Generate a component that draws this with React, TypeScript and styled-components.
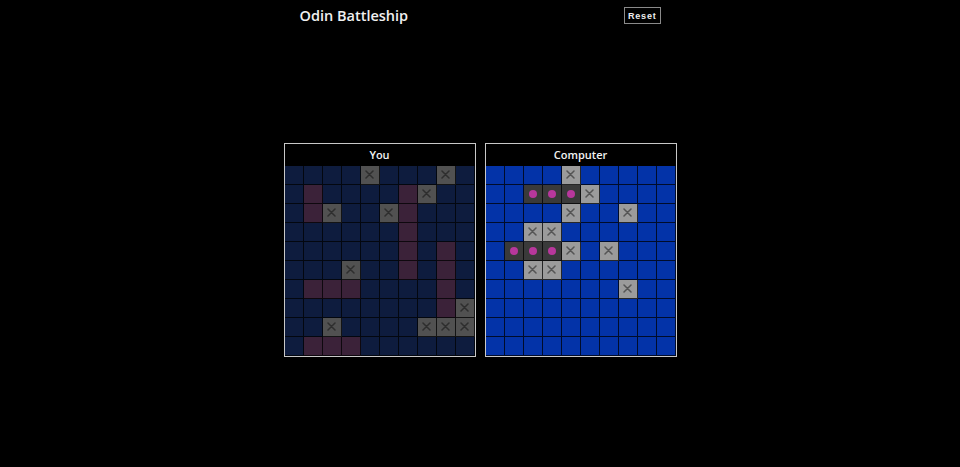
import React from "react";
import styled, { createGlobalStyle } from "styled-components";

const GlobalStyle = createGlobalStyle`
  html, body {
    margin: 0;
    padding: 0;
    background: #000;
    color: #eee;
    font-family: "Open Sans", "Noto Sans", sans-serif;
  }
`;

const Header = styled.header`
  width: 361px;
  height: 32px;
  margin: 0 auto;
  display: flex;
  justify-content: space-between;
  align-items: center;
`;

const Title = styled.h1`
  margin: 0 0 2px;
  font-size: 14.5px;
  font-weight: 600;
  color: #f0f0f0;
`;

const ResetButton = styled.button`
  height: 17px;
  padding: 0 3px;
  margin-bottom: 1px;
  background: #000;
  color: #eee;
  border: 1px solid #8a8a8a;
  font-family: "Liberation Sans", Arial, sans-serif;
  font-size: 9px;
  font-weight: 700;
  letter-spacing: 0.8px;
  cursor: pointer;
`;

const Main = styled.main`
  height: calc(100vh - 32px);
  display: flex;
  justify-content: center;
  align-items: center;
  gap: 9px;
`;

const Board = styled.section`
  border: 1px solid #c8c8c8;
  display: flex;
  flex-direction: column;
`;

const BoardTitle = styled.div`
  height: 22px;
  display: flex;
  align-items: center;
  justify-content: center;
  padding-bottom: 1px;
  box-sizing: border-box;
  font-size: 11px;
  font-weight: 600;
  color: #f2f2f2;
  background: #000;
`;

const Grid = styled.div`
  display: grid;
  grid-template-columns: repeat(10, 19px);
  grid-auto-rows: 19px;
`;

type CellKind = "water" | "ship" | "hit" | "miss" | "sunk";

const palettes = {
  you: { water: "#0e1c3e", ship: "#3b2239", hit: "#515151", miss: "#515151", sunk: "#3a3a3a" },
  computer: { water: "#0333a8", ship: "#0333a8", hit: "#3a3a3a", miss: "#9b9b9b", sunk: "#3a3a3a" },
};

const Cell = styled.div<{ $bg: string }>`
  box-sizing: border-box;
  background: ${(p) => p.$bg};
  border-right: 1px solid rgba(0, 0, 0, 0.75);
  border-bottom: 1px solid rgba(0, 0, 0, 0.75);
  display: flex;
  align-items: center;
  justify-content: center;
`;

const Dot = styled.span`
  width: 8px;
  height: 8px;
  border-radius: 50%;
  background: #b8379c;
`;

const Cross = ({ color }: { color: string }) => (
  <svg width="9" height="9" viewBox="0 0 9 9">
    <path d="M1 1 L8 8 M8 1 L1 8" stroke={color} strokeWidth="1.5" strokeLinecap="round" />
  </svg>
);

// s = ship, x = hit (gray with cross), o = miss, d = hit ship (dot), . = water
const youMap = [
  "....x...x.",
  ".s....sx..",
  ".sx..xs...",
  "......s...",
  "......s.s.",
  "...x..s.s.",
  ".sss....s.",
  "........sx",
  "..x....xxx",
  ".sss......",
];

const computerMap = [
  "....o.....",
  "..dddo....",
  "....o..o..",
  "..oo......",
  ".dddo.o...",
  "..oo......",
  ".......o..",
  "..........",
  "..........",
  "..........",
];

const kindOf = (ch: string): CellKind => {
  if (ch === "s") return "ship";
  if (ch === "x") return "hit";
  if (ch === "o") return "miss";
  if (ch === "d") return "sunk";
  return "water";
};

const GameBoard = ({ title, map, side }: { title: string; map: string[]; side: "you" | "computer" }) => {
  const pal = palettes[side];
  return (
    <Board>
      <BoardTitle>{title}</BoardTitle>
      <Grid>
        {map.map((row, r) =>
          row.split("").map((ch, c) => {
            const kind = kindOf(ch);
            return (
              <Cell key={`${r}-${c}`} $bg={pal[kind]}>
                {kind === "hit" && <Cross color="#2e2e2e" />}
                {kind === "miss" && <Cross color="#555" />}
                {kind === "sunk" && <Dot />}
              </Cell>
            );
          })
        )}
      </Grid>
    </Board>
  );
};

const App = () => {
  return (
    <>
      <GlobalStyle />
      <Header>
        <Title>Odin Battleship</Title>
        <ResetButton>Reset</ResetButton>
      </Header>
      <Main>
        <GameBoard title="You" map={youMap} side="you" />
        <GameBoard title="Computer" map={computerMap} side="computer" />
      </Main>
    </>
  );
};

export default App;
